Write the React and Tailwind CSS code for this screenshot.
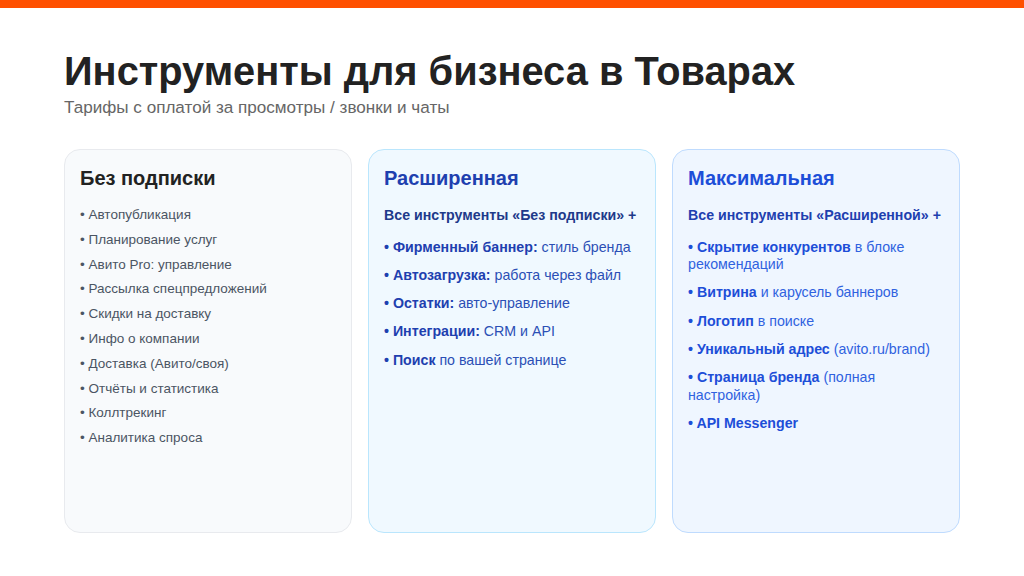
const sans = "font-['Liberation_Sans',Arial,sans-serif]";

function Card({ className, titleClass, title, children }) {
  return (
    <section className={`flex-1 min-w-0 rounded-[16px] border px-[15px] pt-[15px] pb-4 ${className}`}>
      <h2 className={`text-[20px] leading-[26px] font-bold ${titleClass}`}>{title}</h2>
      {children}
    </section>
  );
}

const plain = ["Автопубликация", "Планирование услуг", "Авито Pro: управление", "Рассылка спецпредложений", "Скидки на доставку", "Инфо о компании", "Доставка (Авито/своя)", "Отчёты и статистика", "Коллтрекинг", "Аналитика спроса"];

function Feature({ b, t, boldClass }) {
  return (
    <li className="text-[14.2px] leading-[17.5px]">
      <b className={`font-bold ${boldClass}`}>• {b}</b>{t}
    </li>
  );
}

export default function App() {
  return (
    <div className={`w-[1024px] h-[576px] overflow-hidden bg-white flex flex-col ${sans}`}>
      <div className="h-2 bg-[#ff5000]" />
      <div className="flex-1 flex flex-col px-16 pt-[39px] pb-[43px]">
        <h1 className="text-[39.8px] leading-[48px] font-bold text-[#222222]">Инструменты для бизнеса в Товарах</h1>
        <p className="mt-[3px] text-[17.1px] leading-[20px] text-[#666666]">Тарифы с оплатой за просмотры / звонки и чаты</p>
        <div className="mt-[31px] flex-1 flex gap-4">
          <Card className="bg-[#f8fafc] border-[#e8eaee]" titleClass="text-[#222222]" title="Без подписки">
            <ul className="mt-[16px] flex flex-col gap-[8.8px]">
              {plain.map((t) => (
                <li key={t} className="text-[13.5px] leading-[16px] text-[#4b5563]">• {t}</li>
              ))}
            </ul>
          </Card>
          <Card className="bg-[#f0f9ff] border-[#bae6fd]" titleClass="text-[#1e40af]" title="Расширенная">
            <p className="mt-[15px] text-[14.2px] leading-[18px] font-bold text-[#1e3a8a]">Все инструменты «Без подписки» +</p>
            <ul className="mt-[14.5px] flex flex-col gap-[10.8px] text-[#2b4fb5]">
              <Feature boldClass="text-[#1e40af]" b="Фирменный баннер:" t=" стиль бренда" />
              <Feature boldClass="text-[#1e40af]" b="Автозагрузка:" t=" работа через файл" />
              <Feature boldClass="text-[#1e40af]" b="Остатки:" t=" авто-управление" />
              <Feature boldClass="text-[#1e40af]" b="Интеграции:" t=" CRM и API" />
              <Feature boldClass="text-[#1e40af]" b="Поиск" t=" по вашей странице" />
            </ul>
          </Card>
          <Card className="bg-[#eff6ff] border-[#bfdbfe]" titleClass="text-[#1d4ed8]" title="Максимальная">
            <p className="mt-[15px] text-[14.2px] leading-[18px] font-bold text-[#1e40af]">Все инструменты «Расширенной» +</p>
            <ul className="mt-[14.5px] flex flex-col gap-[10.8px] text-[#2f62e0]">
              <Feature boldClass="text-[#1d4ed8]" b="Скрытие конкурентов" t=" в блоке рекомендаций" />
              <Feature boldClass="text-[#1d4ed8]" b="Витрина" t=" и карусель баннеров" />
              <Feature boldClass="text-[#1d4ed8]" b="Логотип" t=" в поиске" />
              <Feature boldClass="text-[#1d4ed8]" b="Уникальный адрес" t=" (avito.ru/brand)" />
              <Feature boldClass="text-[#1d4ed8]" b="Страница бренда" t=" (полная настройка)" />
              <Feature boldClass="text-[#1d4ed8]" b="API Messenger" t="" />
            </ul>
          </Card>
        </div>
      </div>
    </div>
  );
}
